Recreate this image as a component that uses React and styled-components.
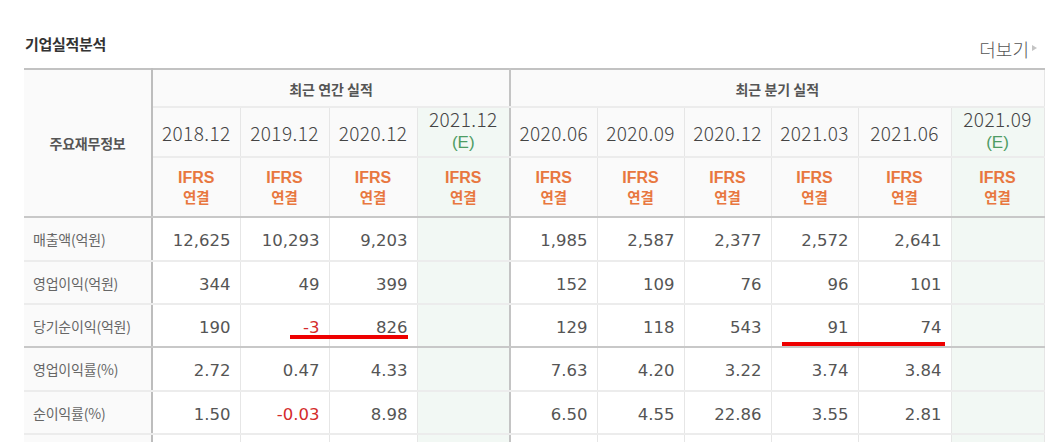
import React from "react";
import styled, { createGlobalStyle } from "styled-components";

const Global = createGlobalStyle`
  html, body { margin: 0; padding: 0; background: #fff; }
  body { font-family: "Noto Sans CJK KR", "Noto Sans", sans-serif; }
`;

const Page = styled.div`
  width: 1020px;
  padding: 0 0 0 24px;
`;

const Head = styled.div`
  display: flex;
  justify-content: space-between;
  align-items: flex-end;
  height: 68px;
`;

const Title = styled.h3`
  margin: 0 0 14px 1px;
  font-size: 15px;
  font-weight: 700;
  color: #333;
  letter-spacing: -0.3px;
`;

const More = styled.a`
  display: flex;
  align-items: center;
  gap: 3px;
  margin: 0 7px 6px 0;
  font-size: 18px;
  font-weight: 300;
  color: #555;
  text-decoration: none;
`;

const Arrow = styled.span`
  width: 0;
  height: 0;
  border-left: 5px solid #c4c4c4;
  border-top: 3.5px solid transparent;
  border-bottom: 3.5px solid transparent;
  margin-top: -2px;
`;

const Wrap = styled.div`
  position: relative;
`;

const Table = styled.table`
  width: 1020px;
  border-collapse: collapse;
  table-layout: fixed;
  border-top: 2px solid #c2c2c2;
`;

const Cell = styled.td`
  padding: 0 ${(p) => (p.$num ? "9px" : "0")} ${(p) => (p.$lift ? "4px" : "0")} 0;
  text-align: ${(p) => (p.$num ? "right" : "center")};
  vertical-align: middle;
  border-right: ${(p) => (p.$sep ? "2px solid #c4c4c4" : "1px solid #e6e6e6")};
  border-bottom: ${(p) => (p.$thick ? "2px solid #c8c8c8" : "2px solid #ececec")};
  background: ${(p) => (p.$est ? "#f2f8f4" : p.$head ? "#fafafa" : "#fff")};
  height: ${(p) => p.$h || 41}px;
  box-sizing: border-box;
`;

const LabelCell = styled(Cell)`
  text-align: left;
  padding-left: 9px;
  background: #fafafa;
  font-size: 14px;
  color: #666;
  letter-spacing: -0.2px;
  border-right: 2px solid #bdbdbd;
`;

const HeadLabel = styled(LabelCell)`
  text-align: center;
  padding-left: 0;
  color: #555;
  font-size: 14px;
`;

const GroupTitle = styled.span`
  font-size: 14px;
  font-weight: 700;
  color: #555;
`;

const DateText = styled.div`
  font-size: 19px;
  font-weight: 300;
  color: #444;
  letter-spacing: 0.4px;
  line-height: 21px;
`;

const Est = styled.div`
  margin-top: 4px;
  font-family: "Liberation Sans", Arial, sans-serif;
  font-size: 17px;
  color: #4e9c64;
  line-height: 19px;
`;

const Ifrs = styled.div`
  font-family: "Liberation Sans", Arial, sans-serif;
  font-size: 16px;
  font-weight: 700;
  color: #e8773f;
  line-height: 19px;
`;

const Link = styled.div`
  font-size: 14.5px;
  font-weight: 700;
  color: #e8773f;
  line-height: 19px;
`;

const Num = styled.span`
  font-family: "DejaVu Sans", Verdana, sans-serif;
  font-size: 16.5px;
  color: ${(p) => (p.$neg ? "#d42b2b" : "#555")};
`;

const Mark = styled.div`
  position: absolute;
  height: 4px;
  background: #ee0000;
`;

const annual = ["2018.12", "2019.12", "2020.12"];
const quarter = ["2020.06", "2020.09", "2020.12", "2021.03", "2021.06"];
const widths = [128, 88, 89, 88, 93, 87, 87, 87, 87, 93, 93];

const rows = [
  { label: "매출액(억원)", a: ["12,625", "10,293", "9,203"], q: ["1,985", "2,587", "2,377", "2,572", "2,641"], h: 44 },
  { label: "영업이익(억원)", a: ["344", "49", "399"], q: ["152", "109", "76", "96", "101"], h: 43 },
  { label: "당기순이익(억원)", a: ["190", "-3", "826"], q: ["129", "118", "543", "91", "74"], h: 43, thick: true },
  { label: "영업이익률(%)", a: ["2.72", "0.47", "4.33"], q: ["7.63", "4.20", "3.22", "3.74", "3.84"], h: 44 },
  { label: "순이익률(%)", a: ["1.50", "-0.03", "8.98"], q: ["6.50", "4.55", "22.86", "3.55", "2.81"], h: 43 },
  { label: "", a: ["", "", ""], q: ["", "", "", "", ""], h: 43 },
];

const IfrsCell = ({ est, sep }) => (
  <Cell $head={!est} $est={est} $sep={sep} $thick $h={60}>
    <Ifrs>IFRS</Ifrs>
    <Link>연결</Link>
  </Cell>
);

export default function App() {
  return (
    <Page>
      <Global />
      <Head>
        <Title>기업실적분석</Title>
        <More href="#">
          더보기
          <Arrow />
        </More>
      </Head>
      <Wrap>
        <Table>
          <colgroup>
            {widths.map((w, i) => (
              <col key={i} style={{ width: w }} />
            ))}
          </colgroup>
          <tbody>
            <tr>
              <HeadLabel as="th" rowSpan={3} $thick>
                주요재무정보
              </HeadLabel>
              <Cell as="th" colSpan={4} $head $sep $h={38}>
                <GroupTitle>최근 연간 실적</GroupTitle>
              </Cell>
              <Cell as="th" colSpan={6} $head $h={38}>
                <GroupTitle>최근 분기 실적</GroupTitle>
              </Cell>
            </tr>
            <tr>
              {annual.map((d) => (
                <Cell key={d} $head $h={50}>
                  <DateText>{d}</DateText>
                </Cell>
              ))}
              <Cell $est $sep $lift $h={50}>
                <DateText>2021.12</DateText>
                <Est>(E)</Est>
              </Cell>
              {quarter.map((d) => (
                <Cell key={"q" + d} $head $h={50}>
                  <DateText>{d}</DateText>
                </Cell>
              ))}
              <Cell $est $lift $h={50}>
                <DateText>2021.09</DateText>
                <Est>(E)</Est>
              </Cell>
            </tr>
            <tr>
              {annual.map((d) => (
                <IfrsCell key={d} />
              ))}
              <IfrsCell est sep />
              {quarter.map((d) => (
                <IfrsCell key={"q" + d} />
              ))}
              <IfrsCell est />
            </tr>
            {rows.map((r, ri) => (
              <tr key={ri}>
                <LabelCell $thick={r.thick} $h={r.h}>
                  {r.label}
                </LabelCell>
                {r.a.map((v, i) => (
                  <Cell key={i} $num $thick={r.thick} $h={r.h}>
                    <Num $neg={v.startsWith("-")}>{v}</Num>
                  </Cell>
                ))}
                <Cell $est $sep $thick={r.thick} $h={r.h} />
                {r.q.map((v, i) => (
                  <Cell key={"q" + i} $num $thick={r.thick} $h={r.h}>
                    <Num $neg={v.startsWith("-")}>{v}</Num>
                  </Cell>
                ))}
                <Cell $est $thick={r.thick} $h={r.h} />
              </tr>
            ))}
          </tbody>
        </Table>
        <Mark style={{ left: 266, top: 267, width: 118 }} />
        <Mark style={{ left: 758, top: 274, width: 163 }} />
      </Wrap>
    </Page>
  );
}
